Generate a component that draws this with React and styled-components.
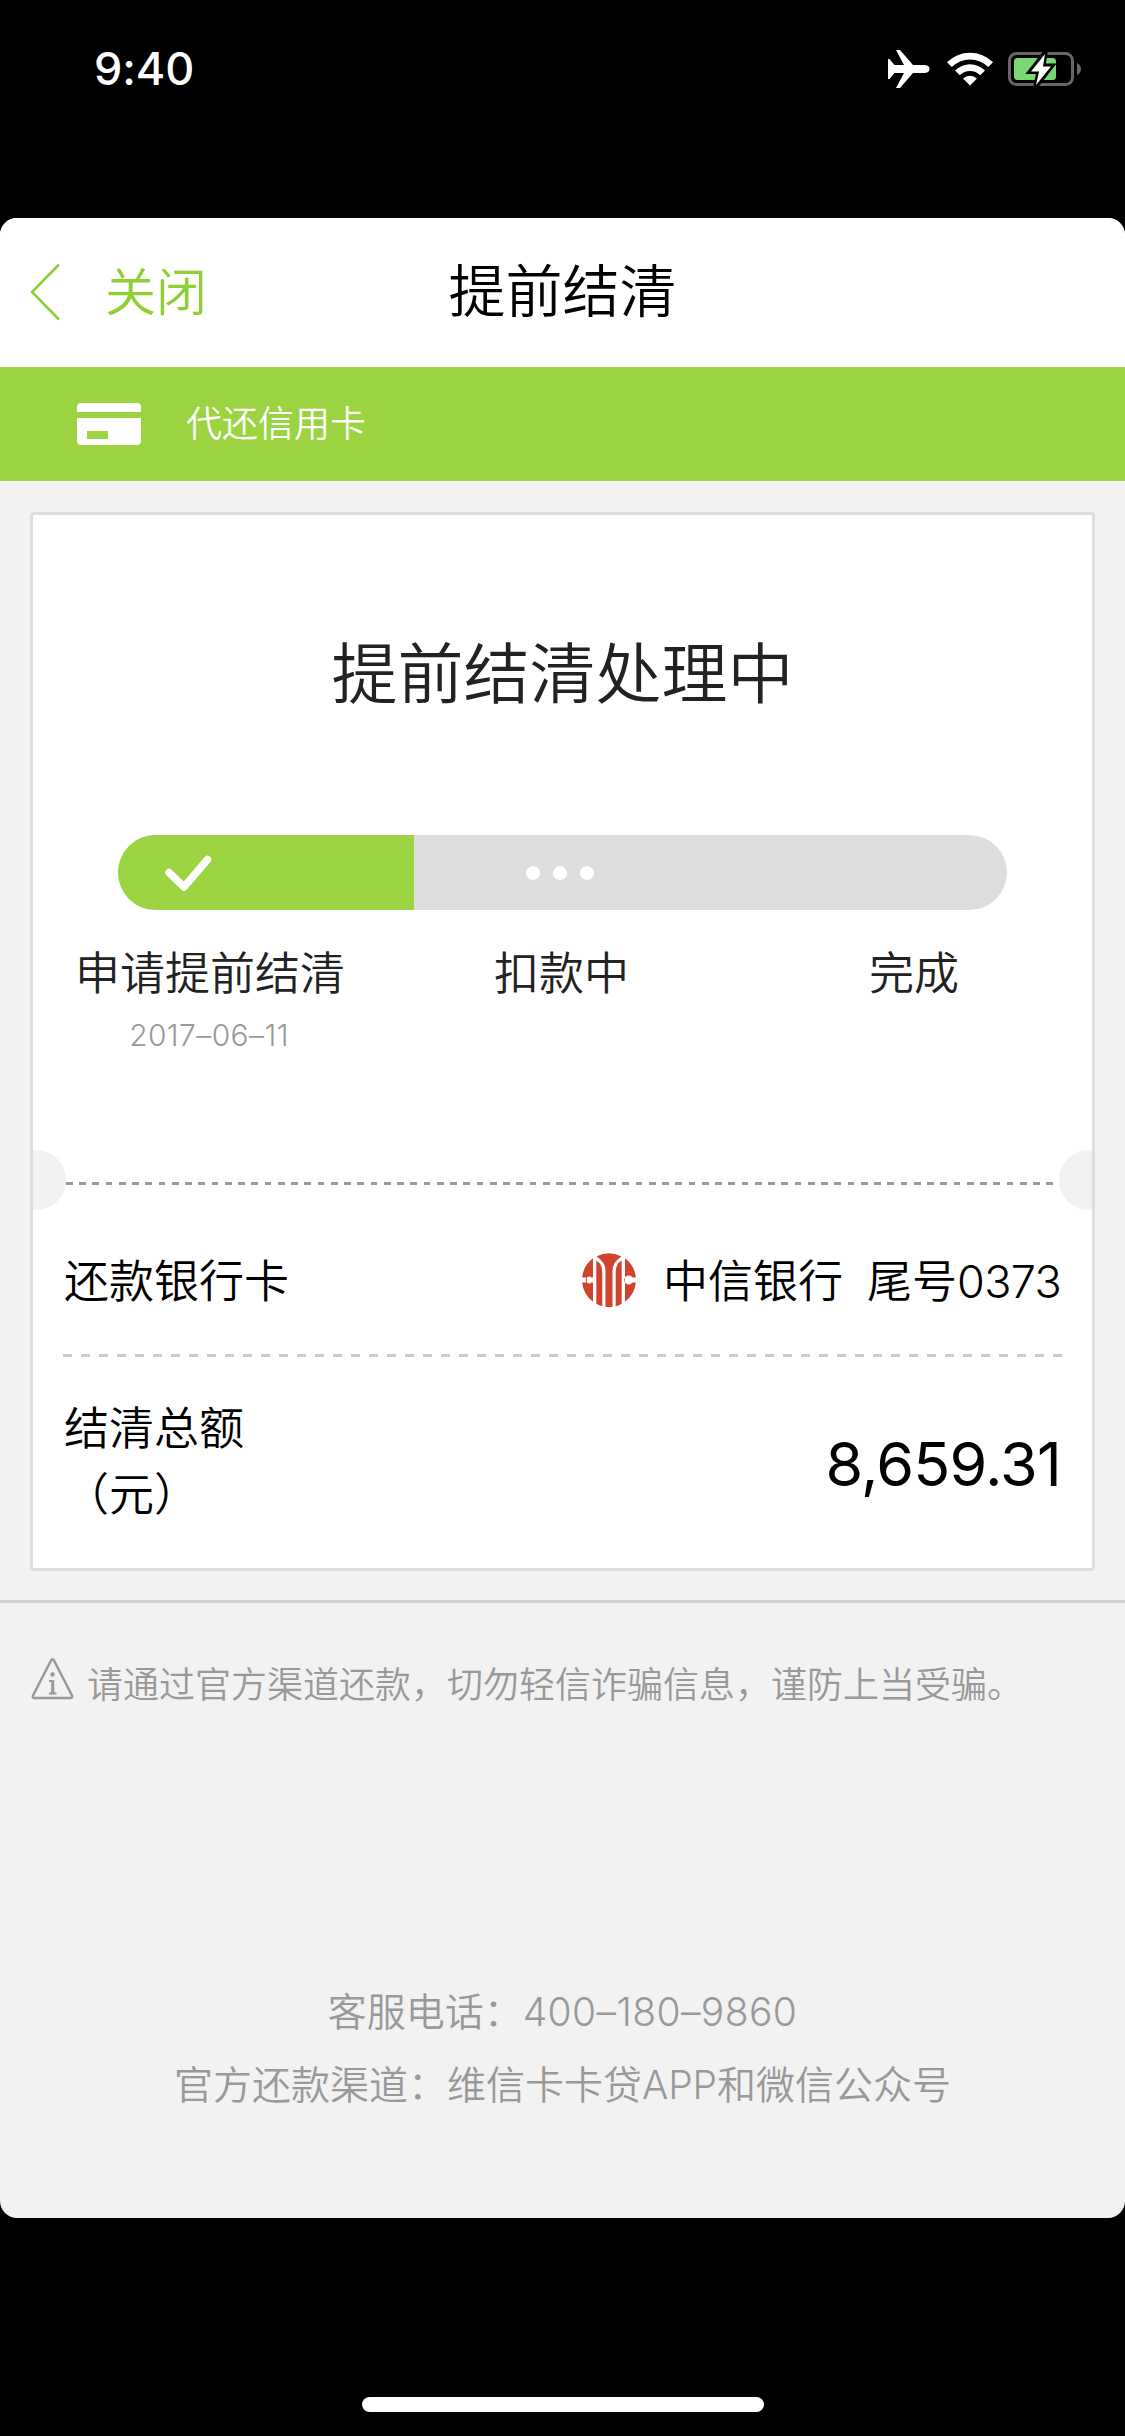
import styled, { createGlobalStyle } from "styled-components";

const GREEN = "#9bd440";
const GREY = "#999";

const GlobalStyle = createGlobalStyle`
  * {
    box-sizing: border-box;
  }
  body {
    margin: 0;
    background: #000;
    font-family: Inter, "Noto Sans CJK SC", sans-serif;
    font-weight: 350;
  }
`;

const Screen = styled.div`
  display: flex;
  flex-direction: column;
  width: 1125px;
  height: 2436px;
  background: #000;
`;

const StatusBar = styled.div`
  display: flex;
  justify-content: space-between;
  align-items: center;
  height: 138px;
  padding: 0 44px 0 94px;
  margin-bottom: 80px;
  color: #fff;
`;

const Time = styled.span`
  font-size: 45px;
  font-weight: 550;
  line-height: 54px;
  letter-spacing: -0.1px;
`;

const StatusIcons = styled.div`
  display: flex;
  align-items: center;

  svg {
    display: block;
  }
  .wifi {
    margin: 0 15px 0 17px;
  }
`;

const Sheet = styled.main`
  display: flex;
  flex-direction: column;
  height: 2000px;
  overflow: hidden;
  border-radius: 17px;
  background: #f2f2f2;
`;

const NavBar = styled.header`
  display: grid;
  grid-template-columns: 1fr auto 1fr;
  align-items: center;
  height: 149px;
  padding: 0 30px;
  background: #fff;
`;

const Back = styled.div`
  display: flex;
  align-items: center;
  gap: 45px;
  font-size: 51px;
  line-height: 60px;
  color: #8fcf33;

  svg {
    margin-bottom: 2px;
  }
`;

const NavTitle = styled.h1`
  margin: 0;
  padding-bottom: 2px;
  font-size: 57px;
  line-height: 70px;
  font-weight: 350;
  color: #000;
`;

const Product = styled.div`
  display: flex;
  align-items: center;
  gap: 45px;
  height: 114px;
  padding-left: 77px;
  font-size: 36px;
  line-height: 44px;
  color: #fff;
  background: ${GREEN};
`;

const Card = styled.section`
  height: 1059px;
  margin: 31px 30px 0;
  border: 3px solid #dedede;
  border-radius: 4px;
  background: #fff;
`;

const Heading = styled.h2`
  margin: 0;
  padding-top: 114px;
  font-size: 66px;
  line-height: 90px;
  font-weight: 350;
  text-align: center;
  color: #222;
`;

const Progress = styled.div`
  display: flex;
  height: 75px;
  margin: 116px 85px 0;
  overflow: hidden;
  border-radius: 38px;
  background: #dedede;
`;

const Step = styled.div`
  flex: none;
  width: 33.333%;
  display: flex;
  align-items: center;
  justify-content: ${(p) => (p.$center ? "center" : "flex-start")};
  gap: 13px;
  padding: ${(p) => (p.$center ? "0 4px 0 0" : "0 0 0 46px")};
  background: ${(p) => (p.$done ? GREEN : "transparent")};
`;

const Dot = styled.i`
  width: 14px;
  height: 14px;
  border-radius: 50%;
  background: #fff;
`;

const Labels = styled.div`
  display: grid;
  grid-template-columns: 354px 1fr 356px;
  height: 240px;
  padding-top: 34px;
  text-align: center;
`;

const Label = styled.div`
  font-size: 45px;
  line-height: 60px;
  color: #222;

  small {
    display: block;
    font-size: 30px;
    line-height: 40px;
    padding: 11px 2px 0 0;
    letter-spacing: 0.4px;
    color: ${GREY};
  }
`;

const Tear = styled.div`
  display: flex;
  align-items: center;
  justify-content: space-between;
  height: 60px;
`;

const Notch = styled.div`
  width: 33px;
  height: 60px;
  border-radius: ${(p) => (p.$right ? "30px 0 0 30px" : "0 30px 30px 0")};
  background: #f2f2f2;
`;

const Dashes = styled.div`
  flex: 1;
  height: 3px;
  margin: ${(p) => p.$margin || "0"};
  background: repeating-linear-gradient(
    90deg,
    ${(p) => p.$color} 0 ${(p) => p.$period / 2}px,
    transparent ${(p) => p.$period / 2}px ${(p) => p.$period}px
  );
`;

const Row = styled.div`
  display: flex;
  align-items: center;
  justify-content: space-between;
  height: ${(p) => p.$height}px;
  padding: 0 31px;
  font-size: 45px;
  line-height: 66px;
  color: #000;
`;

const RowLabel = styled.div`
  span {
    display: block;
  }
`;

const Bank = styled.div`
  display: flex;
  align-items: center;

  svg {
    margin: 0 27px 4px 0;
  }
  span {
    margin-left: 24px;
  }
  b {
    font-weight: 350;
    letter-spacing: -0.7px;
  }
`;

const Amount = styled.div`
  font-size: 61px;
  font-weight: 400;
  padding-top: 4px;
  letter-spacing: -0.8px;
`;

const Notice = styled.div`
  display: flex;
  align-items: center;
  gap: 13px;
  height: 165px;
  margin-top: 29px;
  padding: 1px 0 0 31px;
  border-top: 3px solid #d2d2d2;
  font-size: 36px;
  line-height: 48px;
  color: ${GREY};

  svg {
    margin-bottom: 11px;
  }
`;

const Footer = styled.footer`
  margin-top: 210px;
  font-size: 39px;
  line-height: 73px;
  text-align: center;
  color: ${GREY};

  span {
    letter-spacing: 0.4px;
  }
`;

const HomeIndicator = styled.div`
  width: 402px;
  height: 15px;
  margin: 179px auto 0;
  border-radius: 8px;
  background: #fff;
`;

function PlaneIcon() {
  return (
    <svg width="42" height="38" viewBox="0 0 42 38" fill="#fff">
      <path d="M0 9h1.500L6.500 15H16L8 0h4L25 15h12q4.500 .5 4.500 4t-4.500 4H25L12 38H8l8-15H6.500L1.500 29H0z" />
    </svg>
  );
}

function WifiIcon() {
  return (
    <svg className="wifi" width="46" height="34" viewBox="0 0 46 34" fill="#fff">
      <path d="M0 10.300a32.500 32.500 0 0 1 46 0l-4.800 4.800a25.700 25.700 0 0 0-36.400 0z" />
      <path d="M8 18.500a21.200 21.200 0 0 1 30 0l-4.800 4.700a14.400 14.400 0 0 0-20.400 0z" />
      <path d="M16 26.500a10 10 0 0 1 14 0L23 33.500z" />
    </svg>
  );
}

function BatteryIcon() {
  return (
    <svg width="73" height="38" viewBox="0 0 73 38">
      <rect x="1.500" y="3.500" width="63" height="31" rx="7" fill="none" stroke="#676767" strokeWidth="3" />
      <path d="M69 13q4 2 4 6t-4 6z" fill="#676767" />
      <rect x="6" y="8" width="42" height="22" rx="3.500" fill="#79d873" />
      <path d="M37 3 22.500 21.500H31L28 36 43.500 16H35z" fill="#fff" stroke="#000" strokeWidth="5" />
      <path d="M37 4 23 21.500h8L28 35 43 16.500h-8z" fill="#fff" />
    </svg>
  );
}

function ChevronIcon() {
  return (
    <svg width="30" height="58" viewBox="0 0 30 58" fill="none" stroke="#8fcf33" strokeWidth="2.500">
      <path d="M29 1.500 2 29l27 27.500" />
    </svg>
  );
}

function CreditCardIcon() {
  return (
    <svg width="64" height="42" viewBox="0 0 64 42" fill="#fff">
      <path d="M4 0h56q4 0 4 4v5H0V4q0-4 4-4z" />
      <path fillRule="evenodd" d="M0 15h64v23q0 4-4 4H4q-4 0-4-4zM10 28v8h21v-8z" />
    </svg>
  );
}

function CheckIcon() {
  return (
    <svg width="48" height="38" viewBox="0 0 48 38" fill="none" stroke="#fff" strokeWidth="7.500" strokeLinecap="round" strokeLinejoin="round">
      <path d="M5 18.500 20 33 43.500 5.500" />
    </svg>
  );
}

function CiticLogo() {
  return (
    <svg width="54" height="54" viewBox="0 0 54 54" fill="#d0432f">
      <path d="M14.500 3.600A27 27 0 0 1 39.500 3.600Q30.500 9 30.500 18V53.800a27 27 0 0 1-7 0V18Q23.500 9 14.500 3.600z" />
      <path d="M14.300 7.500Q20.300 11 20.300 19V53.200a27 27 0 0 1-6-2.400z" />
      <path d="M39.700 7.500Q33.700 11 33.700 19V53.200a27 27 0 0 0 6-2.400z" />
      <path d="M11 5.300V24.500H9.500a3.400 3.400 0 1 0 0 5H11V48.700A27 27 0 0 1 .2 29.500H4a4 4 0 0 0 0-5H.2A27 27 0 0 1 11 5.300z" />
      <path d="M43 5.300V48.700A27 27 0 0 0 53.800 29.500H50.500a4.500 4.500 0 1 1 0-5h3.300A27 27 0 0 0 43 5.300z" />
    </svg>
  );
}

function WarningIcon() {
  return (
    <svg width="43" height="42" viewBox="0 0 43 42" fill="none" stroke={GREY} strokeWidth="2.500">
      <path d="M20 2.500Q21.500 0 23 2.500L41 37.500q1 2.500-2 2.500H4q-3 0-2-2.500z" />
      <path d="M18 23h3.500V35M18 35.500h7.500" strokeWidth="2" />
      <path d="M21.800 22v14" strokeWidth="3" />
      <circle cx="21.500" cy="16.500" r="2.200" fill={GREY} stroke="none" />
    </svg>
  );
}

export default function App() {
  return (
    <Screen>
      <GlobalStyle />
      <StatusBar>
        <Time>9:40</Time>
        <StatusIcons>
          <PlaneIcon />
          <WifiIcon />
          <BatteryIcon />
        </StatusIcons>
      </StatusBar>

      <Sheet>
        <NavBar>
          <Back>
            <ChevronIcon />
            关闭
          </Back>
          <NavTitle>提前结清</NavTitle>
        </NavBar>
        <Product>
          <CreditCardIcon />
          代还信用卡
        </Product>

        <Card>
          <Heading>提前结清处理中</Heading>
          <Progress>
            <Step $done>
              <CheckIcon />
            </Step>
            <Step $center>
              <Dot />
              <Dot />
              <Dot />
            </Step>
            <Step />
          </Progress>
          <Labels>
            <Label>
              申请提前结清
              <small>2017–06–11</small>
            </Label>
            <Label>扣款中</Label>
            <Label>完成</Label>
          </Labels>

          <Tear>
            <Notch />
            <Dashes $color="#999" $period={13.25} $margin="6px 0 0" />
            <Notch $right />
          </Tear>

          <Row $height={144}>
            <RowLabel>还款银行卡</RowLabel>
            <Bank>
              <CiticLogo />
              中信银行
              <span>
                尾号<b>0373</b>
              </span>
            </Bank>
          </Row>
          <Dashes $color="#ccc" $period={18} $margin="0 30px" />
          <Row $height={210}>
            <RowLabel>
              结清总额
              <span>（元）</span>
            </RowLabel>
            <Amount>8,659.31</Amount>
          </Row>
        </Card>

        <Notice>
          <WarningIcon />
          请通过官方渠道还款，切勿轻信诈骗信息，谨防上当受骗。
        </Notice>

        <Footer>
          <div>
            客服电话：<span>400–180–9860</span>
          </div>
          <div>官方还款渠道：维信卡卡贷APP和微信公众号</div>
        </Footer>
      </Sheet>

      <HomeIndicator />
    </Screen>
  );
}
